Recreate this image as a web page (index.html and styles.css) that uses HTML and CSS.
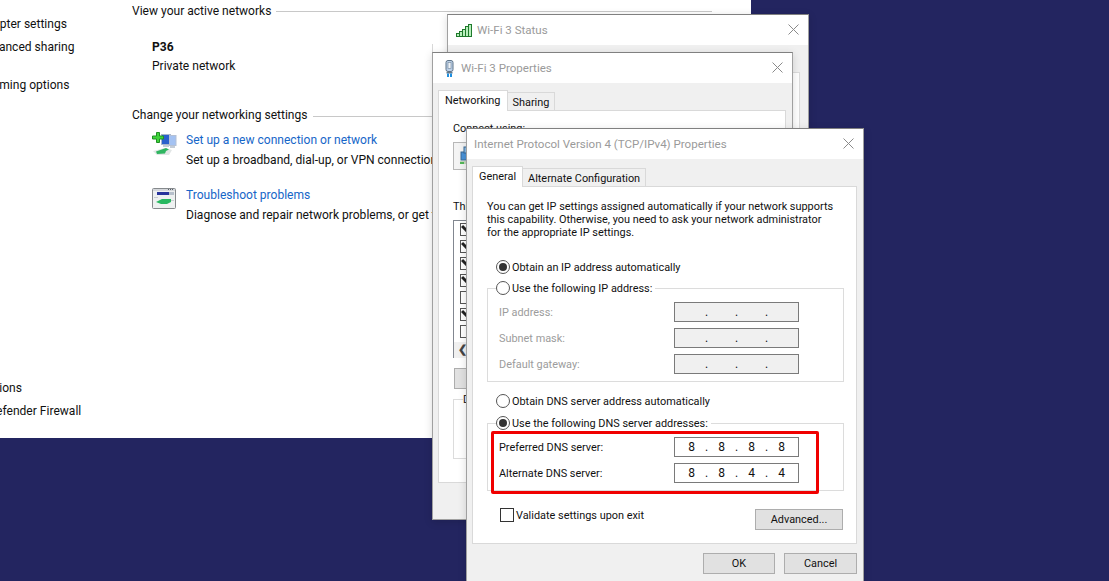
FILE: index.html
```html
<!DOCTYPE html>
<html lang="en">
<head>
<meta charset="utf-8">
<title>Network settings</title>
<link rel="stylesheet" href="styles.css">
</head>
<body>
<div class="desktop">

  <section class="win-main">
    <nav class="nav">
      <div class="nav-top">
        <a>Change adapter settings</a>
        <a class="narrow">Change advanced sharing settings</a>
        <a>Media streaming options</a>
      </div>
      <div class="nav-bottom">
        <a>Internet Options</a>
        <a>Windows Defender Firewall</a>
      </div>
    </nav>
    <div class="content">
      <div class="heading heading-top"><span>View your active networks</span><i class="rule"></i></div>
      <div class="network">
        <div class="net-info">
          <strong>P36</strong>
          <span>Private network</span>
        </div>
        <div class="net-access">Access type:</div>
      </div>
      <div class="heading"><span>Change your networking settings</span><i class="rule"></i></div>
      <div class="task">
        <svg class="task-icon icon-setup" width="25" height="24" viewBox="0 0 25 24">
          <rect x="9.500" y="2.500" width="9" height="10" fill="#2a60cc" stroke="#a9b6cc"/>
          <rect x="17.500" y="3.500" width="6.500" height="10" fill="#a4c2f2" stroke="#b4c0d4"/>
          <path d="M11 13h6v2h-6zM18 14h5v2h-5z" fill="#c4ccd6"/>
          <path d="M1 19l12-3 7 2-3 5-12 0z" fill="#e2e6e6"/>
          <path d="M4 19.500l10-3.500 3 1.500-3 1.500-1 2.500-8 .5z" fill="#2fb560"/>
          <path d="M4.500 .5h3v3.500h4v3h-4v3.500h-3V7h-4V4h4z" fill="#3fd43a" stroke="#1f8f24"/>
        </svg>
        <div>
          <a class="link">Set up a new connection or network</a>
          <p>Set up a broadband, dial-up, or VPN connection; or set up a router or access point.</p>
        </div>
      </div>
      <div class="task task-second">
        <svg class="task-icon" width="25" height="24" viewBox="0 0 25 24">
          <rect x=".5" y=".5" width="23" height="20" rx="1" fill="#eef1f1" stroke="#85898c"/>
          <rect x="1" y="1" width="22" height="2" fill="#d5d8dc"/>
          <path d="M18 1.500h1M20 1.500h1M16 1.500h1" stroke="#5a6068"/>
          <path d="M5 4h12v3H5z" fill="#27349c"/>
          <path d="M17 4h5v3h-5z" fill="#b7c0cc"/>
          <path d="M4 14l6-3h9v3l-4 2H9z" fill="#27b860"/>
          <path d="M2 9h4v1H2zM19 12h3v1h-3z" fill="#c8ccd0"/>
        </svg>
        <div>
          <a class="link">Troubleshoot problems</a>
          <p>Diagnose and repair network problems, or get troubleshooting information.</p>
        </div>
      </div>
    </div>
  </section>

  <section class="win win-status">
    <header class="titlebar">
      <svg class="title-icon" width="17" height="13" viewBox="0 0 17 13">
        <g fill="#b9f0bd" stroke="#1f7a2c">
          <rect x=".5" y="9.500" width="3" height="3"/>
          <rect x="3.500" y="7.500" width="3" height="5"/>
          <rect x="6.500" y="5.500" width="3" height="7"/>
          <rect x="9.500" y="2.500" width="3" height="10"/>
          <rect x="12.500" y=".5" width="3" height="12"/>
        </g>
      </svg>
      <span class="title">Wi-Fi 3 Status</span>
      <svg class="close" width="11" height="11" viewBox="0 0 11 11"><path d="M.5.5l10 10M10.500.5l-10 10"/></svg>
    </header>
    <div class="status-body"><div class="status-panel"></div></div>
  </section>

  <section class="win win-props">
    <header class="titlebar titlebar-props">
      <svg class="title-icon" width="9" height="17" viewBox="0 0 9 17">
        <rect x="1" y="0.500" width="7" height="11" rx="2" fill="#bcd0e8" stroke="#5f7488"/>
        <rect x="3" y="2.500" width="3" height="6" fill="#eef3f8" stroke="#7d90a4" stroke-width=".7"/>
        <rect x="1.500" y="12" width="6" height="1.500" fill="#6c7a88"/>
        <rect x="2" y="13.500" width="2" height="3.500" fill="#1e8fe0"/>
        <rect x="5" y="13.500" width="2" height="3.500" fill="#1e8fe0"/>
      </svg>
      <span class="title">Wi-Fi 3 Properties</span>
      <svg class="close" width="11" height="11" viewBox="0 0 11 11"><path d="M.5.5l10 10M10.500.5l-10 10"/></svg>
    </header>
    <div class="dialog-body">
      <div class="tabs">
        <span class="tab tab-active">Networking</span>
        <span class="tab">Sharing</span>
      </div>
      <div class="props-panel">
        <div class="props-label">Connect using:</div>
        <div class="adapter">
          <svg width="14" height="20" viewBox="0 0 14 20">
            <rect x="1" y="6" width="12" height="8" fill="#4a93d8" stroke="#3a6a96"/>
            <rect x="4" y="1" width="6" height="6" fill="#8fc0ea" stroke="#3a6a96"/>
            <rect x="0" y="15" width="14" height="3" fill="#c8d8c0"/>
            <rect x="0" y="16" width="4" height="2" fill="#54b85a"/>
          </svg>
        </div>
        <div class="props-label props-items">This connection uses the following items:</div>
        <div class="items">
          <div class="item"><i class="mini-check on"></i></div>
          <div class="item"><i class="mini-check on"></i></div>
          <div class="item"><i class="mini-check on"></i></div>
          <div class="item"><i class="mini-check on"></i></div>
          <div class="item"><i class="mini-check"></i></div>
          <div class="item"><i class="mini-check on"></i></div>
          <div class="item"><i class="mini-check"></i></div>
          <div class="scrollbar">&#10094;</div>
        </div>
        <div class="install">Install...</div>
        <div class="desc-group"><span class="desc-legend">Description</span></div>
      </div>
    </div>
  </section>

  <section class="win win-ipv4">
    <header class="titlebar titlebar-ipv4">
      <span class="title">Internet Protocol Version 4 (TCP/IPv4) Properties</span>
      <svg class="close" width="11" height="11" viewBox="0 0 11 11"><path d="M.5.5l10 10M10.500.5l-10 10"/></svg>
    </header>
    <div class="dialog-body">
      <div class="tabs">
        <span class="tab tab-active">General</span>
        <span class="tab">Alternate Configuration</span>
      </div>
      <div class="ipv4-panel">
        <p class="intro">You can get IP settings assigned automatically if your network supports this capability. Otherwise, you need to ask your network administrator for the appropriate IP settings.</p>

        <label class="radio-row first-radio"><i class="radio on"></i>Obtain an IP address automatically</label>
        <div class="group group-ip">
          <label class="radio-row legend"><i class="radio"></i>Use the following IP address:</label>
          <div class="field-row disabled"><span>IP address:</span><div class="ip-field off"><b></b><b>.</b><b></b><b>.</b><b></b><b>.</b><b></b></div></div>
          <div class="field-row disabled"><span>Subnet mask:</span><div class="ip-field off"><b></b><b>.</b><b></b><b>.</b><b></b><b>.</b><b></b></div></div>
          <div class="field-row disabled"><span>Default gateway:</span><div class="ip-field off"><b></b><b>.</b><b></b><b>.</b><b></b><b>.</b><b></b></div></div>
        </div>

        <label class="radio-row dns-radio"><i class="radio"></i>Obtain DNS server address automatically</label>
        <div class="group group-dns">
          <label class="radio-row legend"><i class="radio on"></i>Use the following DNS server addresses:</label>
          <div class="field-row"><span>Preferred DNS server:</span><div class="ip-field"><b>8</b><b>.</b><b>8</b><b>.</b><b>8</b><b>.</b><b>8</b></div></div>
          <div class="field-row"><span>Alternate DNS server:</span><div class="ip-field"><b>8</b><b>.</b><b>8</b><b>.</b><b>4</b><b>.</b><b>4</b></div></div>
        </div>

        <div class="validate-row">
          <label class="validate"><i class="checkbox"></i>Validate settings upon exit</label>
          <span class="btn btn-advanced">Advanced...</span>
        </div>
      </div>
      <div class="footer">
        <span class="btn btn-ok">OK</span>
        <span class="btn btn-cancel">Cancel</span>
      </div>
    </div>
    <div class="highlight"></div>
  </section>

</div>
</body>
</html>
```
FILE: styles.css
```css
* { box-sizing: border-box; }
html, body { margin: 0; padding: 0; }
body {
  font-family: Roboto, "Open Sans", "Liberation Sans", sans-serif;
  font-size: 10.9px;
  color: #111;
}
p { margin: 0; }
.desktop {
  position: relative;
  width: 1109px;
  height: 581px;
  overflow: hidden;
  background: #232560;
}

/* main control panel window */
.win-main {
  position: absolute;
  left: 0;
  top: 0;
  width: 751px;
  height: 438px;
  background: #fff;
  display: flex;
  overflow: hidden;
  font-size: 12.05px;
}
.nav {
  width: 196px;
  margin-left: -64px;
  flex: none;
  height: 438px;
  padding: 17px 0 19px;
  display: flex;
  flex-direction: column;
  justify-content: space-between;
  line-height: 15px;
}
.nav-top, .nav-bottom { display: flex; flex-direction: column; gap: 8px; }
.narrow { width: 150px; }
.content { flex: 1; }
.heading {
  display: flex;
  align-items: center;
  gap: 5px;
  height: 20px;
  width: 580px;
  white-space: nowrap;
}
.heading-top { height: 22px; }
.rule { flex: 1; height: 1px; background: #c8c8c8; margin-top: 3px; }
.heading-top .rule { margin-top: 0; }
.network {
  display: flex;
  height: 83px;
  padding-top: 18px;
  width: 340px;
}
.net-info {
  width: 300px;
  padding-left: 20px;
  display: flex;
  flex-direction: column;
  gap: 4px;
  line-height: 15px;
  flex: none;
}
.net-access { padding: 14px 0 0 11px; border-left: 1px solid #d8d8d8; height: 30px; margin-top: 4px; white-space: nowrap; line-height: 15px; }
.task {
  display: flex;
  gap: 9px;
  padding-left: 20px;
  margin-top: 5px;
  line-height: 20px;
  white-space: nowrap;
}
.task-second { margin-top: 15px; }
.task-icon { margin-top: 3px; flex: none; }
.icon-setup { margin-top: 2px; }
.link { color: #1666c8; }

/* generic dialog */
.win {
  position: absolute;
  background: #f0f0f0;
  border: 1px solid #a0a0a0;
  border-top-color: #808080;
  box-shadow: 0 2px 8px rgba(0, 0, 0, .15);
}
.titlebar {
  display: flex;
  align-items: center;
  height: 30px;
  background: #fff;
  padding: 0 9px 0 8px;
  font-size: 11.55px;
  flex: none;
}
.titlebar-props { padding-left: 12px; }
.title-icon { margin-right: 4px; flex: none; }
.titlebar-props .title-icon { margin-right: 7px; }
.title { color: #9a9a9a; flex: 1; white-space: nowrap; }
.close { flex: none; margin-top: -2px; }
.close path { stroke: #8a8a8a; stroke-width: 1; fill: none; }
.win-status { left: 447px; top: 14px; width: 362px; height: 200px; }
.status-body { padding: 27px 8px 0 0; }
.status-panel { height: 150px; background: #fff; border: 1px solid #dcdcdc; }
.win-props { left: 432px; top: 52px; width: 361px; height: 468px; }
.dialog-body { padding: 7px 6px 0 5px; }
.tabs { display: flex; align-items: flex-end; height: 20px; position: relative; z-index: 1; }
.tab {
  border: 1px solid #d9d9d9;
  border-bottom: 0;
  height: 18px;
  line-height: 19px;
  padding: 0 5px;
  white-space: nowrap;
  background: #f0f0f0;
  margin-left: -1px;
}
.tab:first-child { margin-left: 0; }
.tab-active {
  height: 21px;
  margin-bottom: -1px;
  background: #fff;
  line-height: 19px;
  padding: 0 6px;
}
.props-panel {
  height: 373px;
  background: #fff;
  border: 1px solid #d9d9d9;
  padding: 10px 0 0 14px;
}
.props-label { line-height: 15px; white-space: nowrap; }
.adapter {
  height: 28px;
  width: 320px;
  margin-top: 6px;
  border: 1px solid #b8b8b8;
  padding: 3px 0 0 6px;
  background: #f4f4f4;
}
.props-items { margin-top: 29px; }
.items {
  width: 320px;
  height: 138px;
  margin-top: 6px;
  border: 1px solid #828790;
  padding-top: 1px;
  position: relative;
}
.item { height: 17px; padding: 1px 0 0 6px; }
.mini-check { display: block; width: 13px; height: 13px; border: 1px solid #555; background: #fff; position: relative; overflow: hidden; }
.mini-check.on::after { content: ""; position: absolute; left: 0; top: 3px; width: 7px; height: 3px; background: #222; transform: rotate(45deg); }
.scrollbar {
  height: 16px;
  margin-top: 1px;
  background: #f0f0f0;
  padding-left: 4px;
  font-size: 11px;
  font-weight: bold;
  line-height: 16px;
  color: #444;
}
.install {
  width: 72px;
  height: 21px;
  margin-top: 10px;
  margin-left: 1px;
  background: #e1e1e1;
  border: 1px solid #adadad;
  text-align: center;
  line-height: 19px;
  color: #111;
}
.desc-group { height: 60px; width: 320px; margin-top: 10px; border: 1px solid #dcdcdc; padding-left: 9px; }
.desc-legend { display: block; margin-top: -8px; background: #fff; width: fit-content; line-height: 15px; }

/* IPv4 */
.win-ipv4 { left: 466px; top: 128px; width: 398px; height: 470px; }
.titlebar-ipv4 { padding-left: 7px; }
.ipv4-panel {
  width: 385px;
  height: 358px;
  background: #fff;
  border: 1px solid #d9d9d9;
  padding: 13px 13px 0 14px;
}
.intro { line-height: 13px; width: 349px; }
.radio-row { display: flex; align-items: center; height: 16px; white-space: nowrap; }
.first-radio, .dns-radio { margin-left: 9px; }
.first-radio { margin-top: 20px; }
.dns-radio { margin-top: 11px; }
.radio {
  width: 14px;
  height: 14px;
  flex: none;
  margin-right: 2px;
  border-radius: 50%;
  border: 1px solid #555;
  background: #fff;
  position: relative;
}
.radio.on::after {
  content: "";
  position: absolute;
  left: 2px;
  top: 2px;
  width: 8px;
  height: 8px;
  border-radius: 50%;
  background: #333;
}
.group {
  width: 357px;
  border: 1px solid #dcdcdc;
  padding: 0 44px 7px 11px;
}
.group-ip { margin-top: 13px; }
.group-dns { margin-top: 14px; height: 68px; }
.legend {
  margin: -9px 0 6px -3px;
  background: #fff;
  width: fit-content;
  padding-right: 3px;
}
.field-row {
  display: flex;
  justify-content: space-between;
  align-items: center;
  height: 20px;
  margin-bottom: 6px;
  white-space: nowrap;
}
.field-row:last-child { margin-bottom: 0; }
.disabled { color: #9c9c9c; }
.ip-field {
  width: 125px;
  height: 20px;
  border: 1px solid #7a7a7a;
  background: #fff;
  display: flex;
  justify-content: center;
  align-items: center;
  color: #111;
}
.ip-field.off { background: #f0f0f0; }
.ip-field b { width: 15px; text-align: center; font-weight: 400; font-size: 12px; }
.validate-row {
  display: flex;
  justify-content: space-between;
  align-items: flex-start;
  margin-top: 18px;
  padding-left: 13px;
}
.validate { display: flex; align-items: center; white-space: nowrap; height: 14px; margin-top: -1px; }
.checkbox {
  width: 14px;
  height: 14px;
  margin-right: 2px;
  border: 1px solid #333;
  background: #fff;
  flex: none;
}
.btn {
  display: block;
  height: 21px;
  background: #e1e1e1;
  border: 1px solid #adadad;
  text-align: center;
  line-height: 19px;
  color: #111;
}
.btn-advanced { width: 88px; }
.btn-ok { width: 72px; }
.btn-cancel { width: 73px; }
.footer {
  display: flex;
  justify-content: flex-end;
  gap: 9px;
  padding-top: 9px;
  width: 385px;
}
.highlight {
  position: absolute;
  left: 24px;
  top: 302px;
  width: 328px;
  height: 63px;
  border: 3px solid #f00000;
  border-radius: 2px;
  pointer-events: none;
}
```
